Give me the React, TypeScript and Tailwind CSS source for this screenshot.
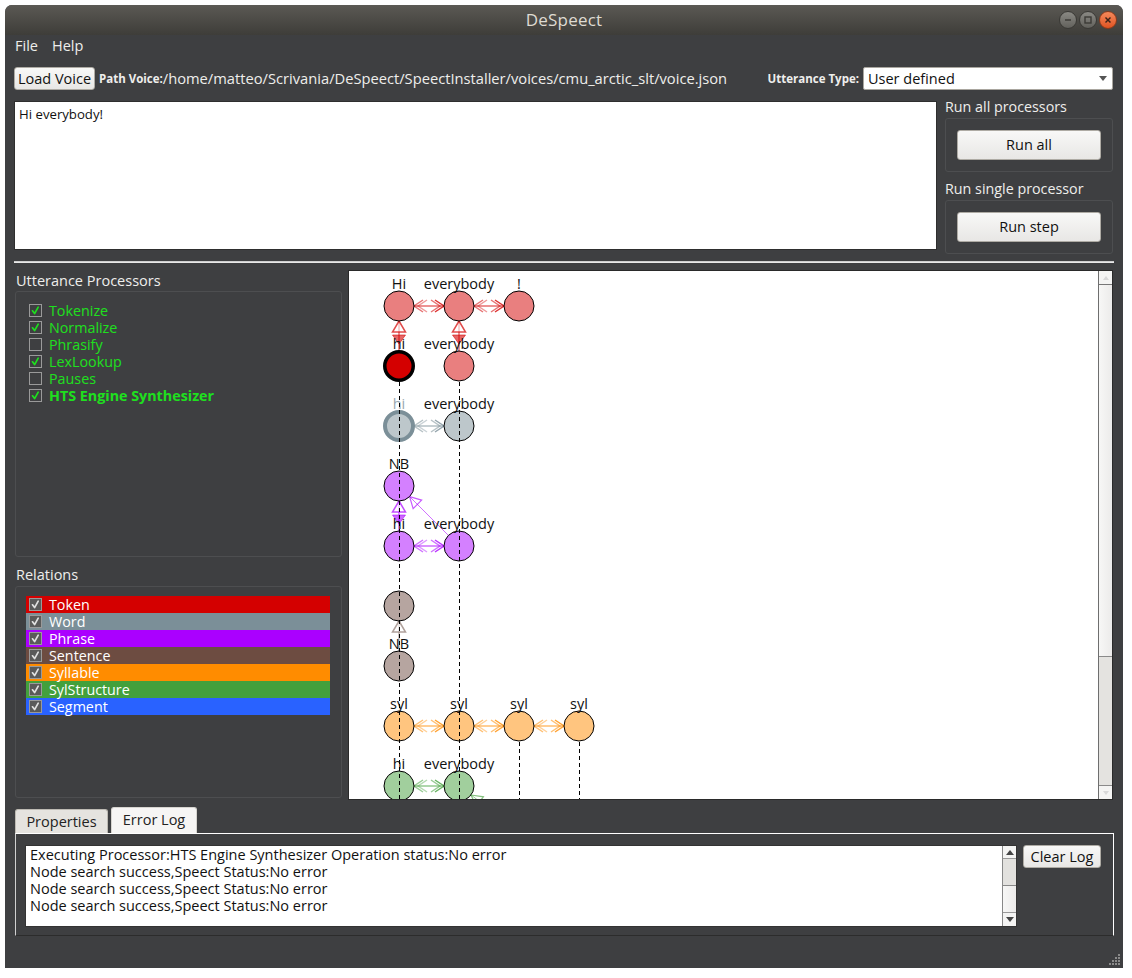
import React from 'react';

const X = (c: number) => 50 + 60 * c;
const Y = (r: number) => 35 + 60 * r;

const C = {
  token: '#d40000',
  word: '#7b8f98',
  phrase: '#aa00ff',
  sentence: '#6d4c41',
  syl: '#ff8c00',
  ss: '#43a03c',
  seg: '#2962ff',
};
const L = {
  token: '#e97f7f',
  word: '#bdc7cb',
  phrase: '#d480ff',
  sentence: '#b6a5a0',
  syl: '#ffc57f',
  ss: '#a1cf9d',
};

function tri(tx: number, ty: number, dx: number, dy: number, len = 10, w = 6) {
  const bx = tx - dx * len;
  const by = ty - dy * len;
  const nx = -dy;
  const ny = dx;
  return `${tx},${ty} ${bx + nx * w},${by + ny * w} ${bx - nx * w},${by - ny * w}`;
}

function chev(tx: number, ty: number, dx: number, len = 9, w = 6) {
  const bx = tx - dx * len;
  return `${bx},${ty - w} ${tx},${ty} ${bx},${ty + w}`;
}

function HArrow({ r, a, b, color }: { r: number; a: number; b: number; color: string }) {
  const x1 = X(a) + 15;
  const x2 = X(b) - 15;
  const y = Y(r);
  return (
    <g fill="none" strokeWidth={1.5}>
      <line x1={x1} y1={y} x2={x2} y2={y} stroke={color} strokeOpacity={0.85} strokeWidth={1} />
      <polyline points={chev(x1, y, -1)} stroke={color} strokeOpacity={0.55} />
      <polyline points={chev(x1 + 4, y, -1)} stroke={color} strokeOpacity={0.4} />
      <polyline points={chev(x2, y, 1)} stroke={color} strokeOpacity={0.8} />
      <polyline points={chev(x2 - 4, y, 1)} stroke={color} strokeOpacity={0.55} />
    </g>
  );
}

function VArrow({ c, child, parent, color, down = true }: { c: number; child: number; parent: number; color: string; down?: boolean }) {
  const x = X(c);
  const y1 = Y(child) - 15;
  const y2 = Y(parent) + 15;
  const yc = Y(child);
  return (
    <g>
      <line x1={x} y1={y1} x2={x} y2={y2} stroke={color} strokeOpacity={0.85} strokeWidth={1} />
      <polygon points={tri(x, y2, 0, -1, 11, 6.5)} fill="white" fillOpacity={0.6} stroke={color} strokeOpacity={0.7} strokeWidth={1.5} />
      {down && (
        <polygon points={`${x - 6.5},${yc - 31} ${x + 6.5},${yc - 31} ${x},${yc - 22}`} fill={color} fillOpacity={0.6} stroke={color} strokeOpacity={0.55} strokeWidth={1} />
      )}
    </g>
  );
}

function DArrow({ cx, cy, dx, dy, len, color }: { cx: number; cy: number; dx: number; dy: number; len: number; color: string }) {
  const tx = cx + dx * 15;
  const ty = cy + dy * 15;
  const ex = cx + dx * len;
  const ey = cy + dy * len;
  return (
    <g>
      <line x1={ex} y1={ey} x2={tx} y2={ty} stroke={color} strokeOpacity={0.7} strokeWidth={0.8} />
      <polygon points={tri(tx, ty, -dx, -dy, 11, 6)} fill="none" stroke={color} strokeOpacity={0.65} strokeWidth={1.2} />
    </g>
  );
}

type N = { c: number; r: number; label: string; fill: string; stroke?: string; sw?: number; lc?: string };

const nodes: N[] = [
  { c: 0, r: 0, label: 'Hi', fill: L.token },
  { c: 1, r: 0, label: 'everybody', fill: L.token },
  { c: 2, r: 0, label: '!', fill: L.token },
  { c: 0, r: 1, label: 'hi', fill: '#d40000', stroke: '#000', sw: 3.5 },
  { c: 1, r: 1, label: 'everybody', fill: L.token },
  { c: 0, r: 2, label: 'hi', fill: L.word, stroke: '#7b8f98', sw: 4, lc: '#9aa9b1' },
  { c: 1, r: 2, label: 'everybody', fill: L.word },
  { c: 0, r: 3, label: 'NB', fill: L.phrase },
  { c: 0, r: 4, label: 'hi', fill: L.phrase },
  { c: 1, r: 4, label: 'everybody', fill: L.phrase },
  { c: 0, r: 5, label: '', fill: L.sentence },
  { c: 0, r: 6, label: 'NB', fill: L.sentence },
  { c: 0, r: 7, label: 'syl', fill: L.syl },
  { c: 1, r: 7, label: 'syl', fill: L.syl },
  { c: 2, r: 7, label: 'syl', fill: L.syl },
  { c: 3, r: 7, label: 'syl', fill: L.syl },
  { c: 0, r: 8, label: 'hi', fill: L.ss },
  { c: 1, r: 8, label: 'everybody', fill: L.ss },
];

function Graph() {
  return (
    <svg width="750" height="528" className="block">
      <rect width="750" height="528" fill="white" />
      <HArrow r={0} a={0} b={1} color={C.token} />
      <HArrow r={0} a={1} b={2} color={C.token} />
      <HArrow r={2} a={0} b={1} color={C.word} />
      <HArrow r={4} a={0} b={1} color={C.phrase} />
      <HArrow r={7} a={0} b={1} color={C.syl} />
      <HArrow r={7} a={1} b={2} color={C.syl} />
      <HArrow r={7} a={2} b={3} color={C.syl} />
      <HArrow r={8} a={0} b={1} color={C.ss} />
      <VArrow c={0} child={1} parent={0} color={C.token} />
      <VArrow c={1} child={1} parent={0} color={C.token} />
      <VArrow c={0} child={4} parent={3} color={C.phrase} />
      <VArrow c={0} child={6} parent={5} color="#8d7770" down={false} />
      <DArrow cx={X(0)} cy={Y(3)} dx={0.7071} dy={0.7071} len={70} color={C.phrase} />
      <DArrow cx={X(1)} cy={Y(8)} dx={0.8} dy={0.6} len={70} color={C.ss} />
      {nodes.map((n, i) => (
        <circle key={'c' + i} cx={X(n.c)} cy={Y(n.r)} r={n.sw ? 15 - n.sw / 2 + 1 : 15} fill={n.fill} stroke={n.stroke ?? '#000'} strokeWidth={n.sw ?? 1} />
      ))}
      {nodes.map((n, i) => (
        <text key={'t' + i} x={X(n.c)} y={Y(n.r) - 17} textAnchor="middle" fontSize="14.5" fontFamily="'Open Sans','Noto Sans',sans-serif" fill={n.lc ?? '#111'}>
          {n.label}
        </text>
      ))}
      {[0, 1].map((c) => (
        <line key={'d' + c} x1={X(c) + 0.5} y1={Y(1) + 16} x2={X(c) + 0.5} y2={528} stroke="#000" strokeWidth={1} strokeDasharray="4 3" />
      ))}
      {[2, 3].map((c) => (
        <line key={'e' + c} x1={X(c) + 0.5} y1={Y(7) + 16} x2={X(c) + 0.5} y2={528} stroke="#000" strokeWidth={1} strokeDasharray="4 3" />
      ))}
    </svg>
  );
}

function Check({ checked, mark, bg }: { checked: boolean; mark: string; bg: string }) {
  return (
    <div className={`w-[13px] h-[13px] border border-[#9a9a9a] shrink-0 flex items-center justify-center ${bg}`}>
      {checked && (
        <svg width="11" height="11" viewBox="0 0 11 11">
          <path d="M2.5 5.8 L4.6 8.6 L8.2 2.2" fill="none" stroke={mark} strokeWidth="1.7" strokeLinecap="round" strokeLinejoin="round" />
        </svg>
      )}
    </div>
  );
}

function Btn({ children, className = '' }: { children: React.ReactNode; className?: string }) {
  return (
    <div className={`bg-linear-to-b from-[#f8f8f7] to-[#e8e7e5] border border-[#aeaba4] rounded-[3px] text-[#111] flex items-center justify-center ${className}`}>
      {children}
    </div>
  );
}

const processors: [string, boolean, boolean][] = [
  ['Tokenize', true, false],
  ['Normalize', true, false],
  ['Phrasify', false, false],
  ['LexLookup', true, false],
  ['Pauses', false, false],
  ['HTS Engine Synthesizer', true, true],
];

const relations: [string, string][] = [
  ['Token', 'bg-[#d40000]'],
  ['Word', 'bg-[#7b8f98]'],
  ['Phrase', 'bg-[#aa00ff]'],
  ['Sentence', 'bg-[#6d4c41]'],
  ['Syllable', 'bg-[#ff8c00]'],
  ['SylStructure', 'bg-[#43a03c]'],
  ['Segment', 'bg-[#2962ff]'],
];

const logLines = [
  'Executing Processor:HTS Engine Synthesizer Operation status:No error',
  'Node search success,Speect Status:No error',
  'Node search success,Speect Status:No error',
  'Node search success,Speect Status:No error',
];

function WinBtn({ kind }: { kind: 'min' | 'max' | 'close' }) {
  const close = kind === 'close';
  return (
    <div
      className={`w-[18px] h-[18px] rounded-full flex items-center justify-center border ${
        close ? 'bg-linear-to-b from-[#f5895a] to-[#df5320] border-[#8a3a1c]' : 'bg-linear-to-b from-[#8a8984] to-[#62615c] border-[#3a3935]'
      }`}
    >
      <svg width="10" height="10" viewBox="0 0 10 10">
        {kind === 'min' && <line x1="2" y1="5" x2="8" y2="5" stroke="#3c3b37" strokeWidth="1.6" />}
        {kind === 'max' && <rect x="2" y="2" width="6" height="6" fill="none" stroke="#3c3b37" strokeWidth="1.4" />}
        {kind === 'close' && (
          <g stroke="#3c2218" strokeWidth="1.5">
            <line x1="2.5" y1="2.5" x2="7.5" y2="7.5" />
            <line x1="7.5" y1="2.5" x2="2.5" y2="7.5" />
          </g>
        )}
      </svg>
    </div>
  );
}

function Grip() {
  const dots: [number, number][] = [];
  for (let r = 0; r < 4; r++) for (let c = 3 - r; c < 4; c++) dots.push([c * 3, r * 3]);
  return (
    <svg width="12" height="12" viewBox="0 0 12 12">
      {dots.map(([x, y], i) => (
        <rect key={i} x={x} y={y} width="2" height="2" fill="#8a8a8a" />
      ))}
    </svg>
  );
}

export default function App() {
  return (
    <div className="w-[1132px] h-[978px] bg-white pt-[5px] pl-[5px] font-['Open_Sans','Noto_Sans',sans-serif]">
      <div className="w-[1118px] h-[963px] bg-[#3e3f41] rounded-t-[7px] overflow-hidden flex flex-col text-[#eeeeec]">
        {/* Title bar */}
        <div className="h-[30px] shrink-0 bg-linear-to-b from-[#5b5954] to-[#3e3d39] relative flex items-center justify-center">
          <span className="text-[#dfdbd2] text-[17px] tracking-[0.2px]">DeSpeect</span>
          <div className="absolute right-[6px] top-[6px] flex gap-[2px]">
            <WinBtn kind="min" />
            <WinBtn kind="max" />
            <WinBtn kind="close" />
          </div>
        </div>
        {/* Menu bar */}
        <div className="h-[22px] shrink-0 flex items-center gap-[14px] pl-[10px] text-[14.5px]">
          <span>File</span>
          <span>Help</span>
        </div>
        <div className="px-[9px] flex flex-col flex-1">
          {/* Toolbar */}
          <div className="mt-[10px] h-[23px] flex items-center">
            <Btn className="w-[81px] h-[23px] text-[14.5px]">Load Voice</Btn>
            <span className="ml-[4px] text-[11.5px] font-bold">Path Voice:</span>
            <span className="text-[14.7px]">/home/matteo/Scrivania/DeSpeect/SpeectInstaller/voices/cmu_arctic_slt/voice.json</span>
            <span className="ml-auto text-[11.5px] font-bold">Utterance Type:</span>
            <div className="ml-[4px] mr-[1px] w-[250px] h-[23px] bg-white border border-[#a9a69f] rounded-[2px] flex items-center justify-between pl-[4px] pr-[5px] text-[#111] text-[14.5px]">
              <span>User defined</span>
              <svg width="8" height="5" viewBox="0 0 8 5">
                <path d="M0 0 L8 0 L4 5 Z" fill="#555" />
              </svg>
            </div>
          </div>
          {/* Text + run */}
          <div className="mt-[11px] h-[153px] flex">
            <div className="w-[923px] h-[149px] bg-white border border-[#2e2e2e] px-[4px] pt-[3px] text-[13.2px] leading-[18px] text-[#111]">Hi everybody!</div>
            <div className="ml-[8px] w-[168px] flex flex-col">
              <div className="h-[17px] text-[14.3px] leading-[17px] -mt-[3px] mb-[3px]">Run all processors</div>
              <div className="h-[54px] border border-[#4d4e50] rounded-[3px] flex items-center justify-center">
                <Btn className="w-[144px] h-[30px] text-[14.5px]">Run all</Btn>
              </div>
              <div className="h-[28px] text-[14.3px] flex items-center pt-[6px]">Run single processor</div>
              <div className="h-[54px] border border-[#4d4e50] rounded-[3px] flex items-center justify-center">
                <Btn className="w-[144px] h-[30px] text-[14.5px]">Run step</Btn>
              </div>
            </div>
          </div>
          {/* Separator */}
          <div className="mt-[7px] h-[2px] bg-[#cfcfcf] border-b border-[#e8e8e8]" />
          {/* Middle */}
          <div className="mt-[7px] h-[530px] flex">
            <div className="ml-[1px] w-[327px] flex flex-col">
              <div className="h-[21px] text-[14.5px] pl-[1px] flex items-center">Utterance Processors</div>
              <div className="h-[266px] border border-[#4d4e50] rounded-[3px] pt-[10px] pl-[13px]">
                {processors.map(([name, on, bold]) => (
                  <div key={name} className="h-[17px] flex items-center gap-[7px]">
                    <Check checked={on} mark="#1ee01e" bg="bg-[#3e3f41]" />
                    <span className={`text-[14.3px] leading-[16px] text-[#1ee01e] ${bold ? 'font-bold' : ''}`}>{name}</span>
                  </div>
                ))}
              </div>
              <div className="h-[29px] text-[14.5px] pl-[1px] pt-[8px] leading-[19px]">Relations</div>
              <div className="h-[212px] border border-[#4d4e50] rounded-[3px] pt-[9px] pl-[10px] pr-[11px]">
                {relations.map(([name, bg]) => (
                  <div key={name} className={`h-[17px] flex items-center gap-[7px] pl-[3px] ${bg}`}>
                    <Check checked mark="#e0e0e0" bg="bg-[#5a5a5a]" />
                    <span className="text-[14.3px] leading-[15px] text-white">{name}</span>
                  </div>
                ))}
              </div>
            </div>
            <div className="ml-[6px] w-[765px] h-[530px] border border-[#2a2a2a] bg-white flex">
              <div className="flex-1 overflow-hidden">
                <Graph />
              </div>
              <div className="w-[14px] flex flex-col border-l border-[#6e6e6e]">
                <div className="h-[14px] bg-[#f4f4f3] border-b border-[#777] flex items-center justify-center">
                  <svg width="6" height="4" viewBox="0 0 6 4"><path d="M0 4 L3 0 L6 4 Z" fill="#d8d8d8" /></svg>
                </div>
                <div className="h-[371px] bg-linear-to-r from-[#f7f7f6] to-[#ecebea]" />
                <div className="h-[130px] bg-[#e4e3e0] border-y border-[#8a8a8a]" />
                <div className="flex-1 bg-[#f4f4f3] flex items-center justify-center">
                  <svg width="6" height="4" viewBox="0 0 6 4"><path d="M0 0 L6 0 L3 4 Z" fill="#d8d8d8" /></svg>
                </div>
              </div>
            </div>
          </div>
          {/* Tabs */}
          <div className="mt-[7px] h-[26px] flex items-end pl-[1px]">
            <div className="w-[93px] h-[24px] bg-[#e5e3df] border border-[#bdbab3] border-b-0 rounded-t-[3px] text-[#222] text-[14.5px] flex items-center justify-center">Properties</div>
            <div className="ml-[3px] w-[86px] h-[26px] bg-[#f6f5f4] border border-[#d6d4cf] border-b-0 rounded-t-[3px] text-[#222] text-[14.5px] flex items-center justify-center pb-[2px]">Error Log</div>
          </div>
          <div className="ml-[1px] h-[103px] border border-t-white border-l-[#d0d0d0] border-r-white border-b-[#2c2c2c] pt-[11px] pl-[9px] flex">
            <div className="w-[992px] h-[82px] bg-white border border-[#333] flex">
              <div className="flex-1 pl-[4px] pt-[1px] flex flex-col gap-[1px] text-[14.5px] text-[#111]">
                {logLines.map((t, i) => (
                  <div key={i} className="h-[16px] leading-[16px]">{t}</div>
                ))}
              </div>
              <div className="w-[14px] flex flex-col border-l border-[#888]">
                <div className="h-[13px] bg-[#f4f4f3] border-b border-[#999] flex items-center justify-center">
                  <svg width="8" height="5" viewBox="0 0 8 5"><path d="M0 5 L4 0 L8 5 Z" fill="#444" /></svg>
                </div>
                <div className="h-[27px] bg-[#e2e1de] border-b border-[#888]" />
                <div className="flex-1 bg-linear-to-r from-[#f7f7f6] to-[#ecebea]" />
                <div className="h-[14px] bg-[#f4f4f3] border-t border-[#999] flex items-center justify-center">
                  <svg width="8" height="5" viewBox="0 0 8 5"><path d="M0 0 L8 0 L4 5 Z" fill="#444" /></svg>
                </div>
              </div>
            </div>
            <Btn className="ml-[6px] w-[78px] h-[23px] text-[14.5px]">Clear Log</Btn>
          </div>
          {/* Status */}
          <div className="flex-1 flex items-end justify-end -mr-[7px] pb-[2px]">
            <Grip />
          </div>
        </div>
      </div>
    </div>
  );
}
